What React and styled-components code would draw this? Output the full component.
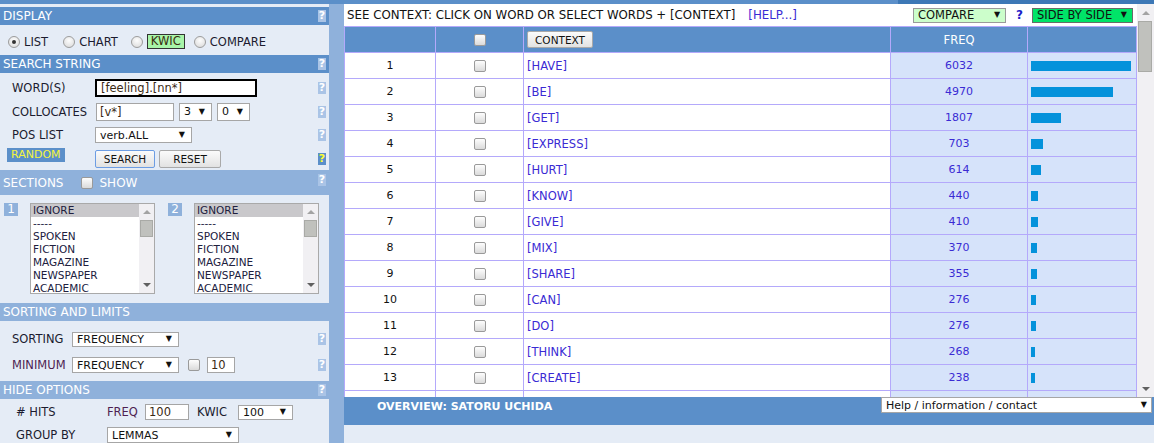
import React from 'react';
import styled, { createGlobalStyle } from 'styled-components';

const blue = '#5b8fc9';
const lightBlue = '#8fb1db';
const panelBg = '#e5ecf6';
const lavender = '#b4a9fb';
const freqBg = '#d6e3fa';
const linkBlue = '#3a2bd4';

const GlobalStyle = createGlobalStyle`
  *, *::before, *::after { box-sizing: border-box; }
  html, body { margin: 0; padding: 0; background: ${panelBg}; }
  body {
    font-family: "DejaVu Sans", Verdana, sans-serif;
    font-size: 11.5px;
    color: #1b1b2f;
  }
`;

const Page = styled.div`
  width: 1154px;
  height: 443px;
  overflow: hidden;
  display: flex;
  flex-direction: column;
  background: ${panelBg};
`;

const TopStrip = styled.div`
  flex: 0 0 4px;
  display: flex;
`;

const StripPart = styled.div`
  flex: ${(p) => (p.$w ? `0 0 ${p.$w}px` : 1)};
  background: ${(p) => p.$c};
`;

const Body = styled.div`
  flex: 1;
  display: flex;
  min-height: 0;
`;

const Sidebar = styled.div`
  flex: 0 0 329px;
  padding-top: 3px;
  display: flex;
  flex-direction: column;
  overflow: hidden;
`;

const Divider = styled.div`
  flex: 0 0 15px;
  background: ${lightBlue};
`;

const Content = styled.div`
  flex: 1;
  min-width: 0;
  min-height: 0;
  display: flex;
  flex-direction: column;
`;

/* ---------- sidebar parts ---------- */

const SectionHeader = styled.div`
  flex: 0 0 ${(p) => p.$h || 18}px;
  background: ${(p) => (p.$light ? lightBlue : blue)};
  color: #fff;
  font-size: 12px;
  display: flex;
  align-items: center;
  padding: 0 3px;
`;

const HelpIcon = styled.span`
  margin-left: auto;
  flex: 0 0 8px;
  height: 12px;
  background: ${(p) => p.$bg || '#aac4e6'};
  color: ${(p) => p.$fg || '#fff'};
  font: bold 11px/12px "DejaVu Sans", sans-serif;
  text-align: center;
  align-self: ${(p) => (p.$top ? 'flex-start' : 'center')};
  margin-top: ${(p) => p.$top || 0}px;
`;

const OptionRow = styled.div`
  flex: 0 0 30px;
  display: flex;
  align-items: center;
  padding: 3px 0 0 8px;
`;

const Option = styled.span`
  display: flex;
  align-items: center;
  gap: 4px;
  margin-right: ${(p) => p.$mr || 0}px;
`;

const Radio = styled.span`
  flex: 0 0 12px;
  height: 12px;
  border-radius: 50%;
  border: 1px solid #9c9c9c;
  background: radial-gradient(circle at 50% 35%, #fdfdfd, #d8d8d8);
  display: flex;
  align-items: center;
  justify-content: center;

  &::after {
    content: '';
    width: 4px;
    height: 4px;
    border-radius: 50%;
    background: #333;
    display: ${(p) => (p.$checked ? 'block' : 'none')};
  }
`;

const Highlight = styled.span`
  background: #a8f5a8;
  border: 1px solid #333;
  padding: 0 3px;
  line-height: 13px;
  color: #3a2e10;
`;

const FormArea = styled.div`
  flex: 0 0 auto;
  padding: ${(p) => p.$pad || '0'};
  display: flex;
  flex-direction: column;
`;

const Row = styled.div`
  flex: 0 0 ${(p) => p.$h}px;
  display: flex;
  align-items: center;
  padding: 0 3px 0 ${(p) => p.$pl ?? 12}px;
`;

const Label = styled.span`
  flex: 0 0 ${(p) => p.$w}px;
  color: ${(p) => (p.$purple ? '#4e1f52' : '#1b1b2f')};
`;

const Field = styled.span`
  flex: 0 0 ${(p) => p.$w}px;
  height: ${(p) => p.$h || 18}px;
  display: flex;
  align-items: center;
  border: ${(p) => (p.$strong ? '2px solid #000' : '1px solid #a5a5a5')};
  background: #fff;
  padding-left: ${(p) => (p.$strong ? 4 : 3)}px;
  color: #3a2a14;
  margin-right: ${(p) => p.$mr || 0}px;
  white-space: nowrap;
`;

const SelectBox = styled.span`
  flex: 0 0 ${(p) => p.$w}px;
  height: ${(p) => p.$h || 16}px;
  display: flex;
  align-items: center;
  justify-content: space-between;
  border: 1px solid ${(p) => p.$border || '#a6a6a6'};
  background: ${(p) => p.$bg || '#fff'};
  padding: 0 ${(p) => p.$pr ?? 6}px 0 ${(p) => p.$pl ?? 4}px;
  font-size: ${(p) => p.$fs || 11}px;
  color: #111;
  margin-right: ${(p) => p.$mr || 0}px;
  margin-left: ${(p) => (p.$auto ? 'auto' : '0')};
  white-space: nowrap;
`;

const Caret = styled.span`
  font-size: 8px;
  line-height: 1;
  color: #111;
`;

const Button = styled.span`
  flex: 0 0 ${(p) => p.$w}px;
  width: ${(p) => p.$w}px;
  height: ${(p) => p.$h || 18}px;
  display: inline-flex;
  align-items: center;
  justify-content: center;
  border: 1px solid ${(p) => (p.$focus ? '#6d9de3' : '#a9a9a9')};
  border-radius: 2px;
  background: linear-gradient(#fbfbfb, #e2e2e2);
  font-size: 10.5px;
  color: #111;
  margin-right: ${(p) => p.$mr || 0}px;
  vertical-align: middle;
`;

const RandomTag = styled.span`
  flex: 0 0 58px;
  height: 14px;
  align-self: flex-start;
  margin: 1px 30px 0 0;
  background: ${blue};
  color: #f4f43c;
  font-size: 11px;
  line-height: 14px;
  padding-left: 4px;
`;

const Check = styled.span`
  display: inline-block;
  vertical-align: middle;
  flex: 0 0 12px;
  width: 12px;
  height: 12px;
  border: 1px solid #9a9a9a;
  border-radius: 2px;
  background: linear-gradient(#fdfdfd, #dadada);
  margin: 0 ${(p) => p.$mr || 0}px 0 ${(p) => p.$ml || 0}px;
`;

const SectionsBody = styled.div`
  flex: 0 0 108px;
  display: flex;
  align-items: flex-start;
  padding: 8px 0 0 4px;
`;

const NumTag = styled.span`
  flex: 0 0 14px;
  height: 13px;
  margin-right: 12px;
  background: ${lightBlue};
  color: #fff;
  font-size: 12px;
  line-height: 13px;
  text-align: center;
`;

const ListBox = styled.div`
  flex: 0 0 125px;
  height: 91px;
  margin-right: 13px;
  border: 1px solid #a9a9a9;
  background: #fff;
  display: flex;
  overflow: hidden;
`;

const ListItems = styled.div`
  flex: 1;
  font-size: 10.5px;
  color: #20203e;
`;

const ListItem = styled.div`
  height: 13px;
  line-height: 13px;
  padding-left: 2px;
  background: ${(p) => (p.$sel ? '#c9c8cb' : 'transparent')};
`;

const MiniScroll = styled.div`
  flex: 0 0 ${(p) => p.$w || 15}px;
  background: #f1f0f3;
  display: flex;
  flex-direction: column;
`;

const ArrowBox = styled.div`
  flex: 0 0 ${(p) => p.$h}px;
  display: flex;
  align-items: center;
  justify-content: center;
`;

const Tri = styled.span`
  width: 0;
  height: 0;
  border-left: 4px solid transparent;
  border-right: 4px solid transparent;
  ${(p) =>
    p.$up
      ? `border-bottom: 4px solid ${p.$c};`
      : `border-top: 4px solid ${p.$c};`}
`;

const Thumb = styled.div`
  flex: 0 0 ${(p) => p.$h}px;
  margin: ${(p) => p.$m || '0 1px'};
  background: #c0c1bd;
  border: 1px solid #a9aaa6;
`;

const Gap = styled.div`
  flex: 1;
`;

/* ---------- content parts ---------- */

const ScrollArea = styled.div`
  flex: 0 0 393px;
  height: 393px;
  min-height: 0;
  overflow: hidden;
  display: flex;
`;

const ScrollInner = styled.div`
  flex: 1;
  min-width: 0;
  overflow: hidden;
  background: #fff;
  display: flex;
  flex-direction: column;
`;

const ContextBar = styled.div`
  flex: 0 0 22px;
  display: flex;
  align-items: center;
  padding: 0 4px 0 3px;
  color: #111;
  font-size: 11.8px;
  white-space: nowrap;
`;

const HelpLink = styled.span`
  margin-left: 13px;
  color: ${linkBlue};
`;

const Question = styled.span`
  margin: 0 9px 0 10px;
  color: #2020c8;
  font-weight: bold;
  font-size: 12px;
`;

const Table = styled.table`
  border-collapse: collapse;
  table-layout: fixed;
  width: 792px;
  flex-shrink: 0;
`;

const Col = styled.col`
  width: ${(p) => p.$w}px;
`;

const Th = styled.th`
  height: 26px;
  padding: 0 0 0 ${(p) => p.$pl || 0}px;
  background: ${blue};
  border: 1px solid ${lavender};
  font-weight: normal;
  color: #fff;
  font-size: 11.5px;
  text-align: ${(p) => p.$align || 'center'};
`;

const Td = styled.td`
  height: 26px;
  padding: 0 0 0 ${(p) => p.$pl || 0}px;
  border: 1px solid ${lavender};
  background: ${(p) => (p.$freq ? freqBg : '#fff')};
  color: ${(p) => p.$color || '#111'};
  font-size: ${(p) => p.$fs || 11}px;
  text-align: ${(p) => p.$align || 'center'};
  vertical-align: middle;
  white-space: nowrap;
`;

const Bar = styled.div`
  height: 10px;
  background: #0492db;
`;

const Scrollbar = styled.div`
  flex: 0 0 17px;
  background: #f1f0f3;
  display: flex;
  flex-direction: column;
`;

const OverviewBar = styled.div`
  flex: 0 0 28px;
  background: ${blue};
  display: flex;
  align-items: flex-start;
  justify-content: space-between;
`;

const OverviewTitle = styled.span`
  padding: 2px 0 0 33px;
  font-weight: bold;
  font-size: 11px;
  line-height: 16px;
  color: #fff;
`;

const rows = [
  [1, 'HAVE', 6032],
  [2, 'BE', 4970],
  [3, 'GET', 1807],
  [4, 'EXPRESS', 703],
  [5, 'HURT', 614],
  [6, 'KNOW', 440],
  [7, 'GIVE', 410],
  [8, 'MIX', 370],
  [9, 'SHARE', 355],
  [10, 'CAN', 276],
  [11, 'DO', 276],
  [12, 'THINK', 268],
  [13, 'CREATE', 238],
];

const sections = ['IGNORE', '-----', 'SPOKEN', 'FICTION', 'MAGAZINE', 'NEWSPAPER', 'ACADEMIC'];

const Select = ({ children, ...rest }) => (
  <SelectBox {...rest}>
    <span>{children}</span>
    <Caret>▼</Caret>
  </SelectBox>
);

const SectionList = () => (
  <ListBox>
    <ListItems>
      {sections.map((s, i) => (
        <ListItem key={s} $sel={i === 0}>
          {s}
        </ListItem>
      ))}
    </ListItems>
    <MiniScroll>
      <ArrowBox $h={16}>
        <Tri $up $c="#a3a3a3" />
      </ArrowBox>
      <Thumb $h={17} />
      <Gap />
      <ArrowBox $h={16}>
        <Tri $c="#606060" />
      </ArrowBox>
    </MiniScroll>
  </ListBox>
);

const LeftPanel = () => (
  <Sidebar>
    <SectionHeader>
      DISPLAY
      <HelpIcon>?</HelpIcon>
    </SectionHeader>
    <OptionRow>
      <Option $mr={15}>
        <Radio $checked />
        LIST
      </Option>
      <Option $mr={13}>
        <Radio />
        CHART
      </Option>
      <Option $mr={9}>
        <Radio />
        <Highlight>KWIC</Highlight>
      </Option>
      <Option>
        <Radio />
        COMPARE
      </Option>
    </OptionRow>

    <SectionHeader>
      SEARCH STRING
      <HelpIcon>?</HelpIcon>
    </SectionHeader>
    <FormArea $pad="3px 0 0">
      <Row $h={24}>
        <Label $w={83}>WORD(S)</Label>
        <Field $w={162} $strong>
          [feeling].[nn*]
        </Field>
        <HelpIcon>?</HelpIcon>
      </Row>
      <Row $h={23}>
        <Label $w={84}>COLLOCATES</Label>
        <Field $w={78} $mr={5}>
          [v*]
        </Field>
        <Select $w={33} $h={18} $mr={5}>
          3
        </Select>
        <Select $w={33} $h={18}>
          0
        </Select>
        <HelpIcon>?</HelpIcon>
      </Row>
      <Row $h={24}>
        <Label $w={83}>POS LIST</Label>
        <Select $w={97}>verb.ALL</Select>
        <HelpIcon>?</HelpIcon>
      </Row>
      <Row $h={23} $pl={7}>
        <RandomTag>RANDOM</RandomTag>
        <Button $w={60} $focus $mr={4}>
          SEARCH
        </Button>
        <Button $w={62}>RESET</Button>
        <HelpIcon $bg={blue} $fg="#ffff33">
          ?
        </HelpIcon>
      </Row>
    </FormArea>

    <SectionHeader $light $h={25}>
      SECTIONS
      <Check $ml={17} $mr={7} />
      SHOW
      <HelpIcon $top={4}>?</HelpIcon>
    </SectionHeader>
    <SectionsBody>
      <NumTag>1</NumTag>
      <SectionList />
      <NumTag>2</NumTag>
      <SectionList />
    </SectionsBody>

    <SectionHeader $light>SORTING AND LIMITS</SectionHeader>
    <FormArea $pad="5px 0 3px">
      <Row $h={26}>
        <Label $w={60}>SORTING</Label>
        <Select $w={107} $h={15}>
          FREQUENCY
        </Select>
        <HelpIcon>?</HelpIcon>
      </Row>
      <Row $h={26}>
        <Label $w={60} $purple>
          MINIMUM
        </Label>
        <Select $w={107} $mr={9}>
          FREQUENCY
        </Select>
        <Check $mr={7} />
        <Field $w={28} $h={16}>
          10
        </Field>
        <HelpIcon>?</HelpIcon>
      </Row>
    </FormArea>

    <SectionHeader $light>
      HIDE OPTIONS
      <HelpIcon>?</HelpIcon>
    </SectionHeader>
    <FormArea $pad="1px 0 0">
      <Row $h={24} $pl={16}>
        <Label $w={91}># HITS</Label>
        <Label $w={38} $purple>
          FREQ
        </Label>
        <Field $w={44} $h={16} $mr={8}>
          100
        </Field>
        <Label $w={41}>KWIC</Label>
        <Select $w={55} $h={15}>
          100
        </Select>
      </Row>
      <Row $h={22} $pl={16}>
        <Label $w={91}>GROUP BY</Label>
        <Select $w={132}>LEMMAS</Select>
      </Row>
    </FormArea>
  </Sidebar>
);

const ResultsTable = () => {
  const max = rows[0][2];
  return (
    <Table>
      <colgroup>
        <Col $w={91} />
        <Col $w={88} />
        <Col $w={367} />
        <Col $w={137} />
        <Col $w={109} />
      </colgroup>
      <thead>
        <tr>
          <Th />
          <Th>
            <Check />
          </Th>
          <Th $align="left" $pl={3}>
            <Button $w={66} $h={17}>
              CONTEXT
            </Button>
          </Th>
          <Th>FREQ</Th>
          <Th />
        </tr>
      </thead>
      <tbody>
        {rows.map(([n, word, freq]) => (
          <tr key={n}>
            <Td>{n}</Td>
            <Td>
              <Check />
            </Td>
            <Td $align="left" $pl={3} $fs={11.5} $color={linkBlue}>
              [{word}]
            </Td>
            <Td $freq $color={linkBlue}>
              {freq}
            </Td>
            <Td $freq $align="left" $pl={3}>
              <Bar style={{ width: `${Math.round((freq / max) * 100)}px` }} />
            </Td>
          </tr>
        ))}
        <tr>
          <Td />
          <Td />
          <Td />
          <Td $freq />
          <Td $freq />
        </tr>
      </tbody>
    </Table>
  );
};

const RightPanel = () => (
  <Content>
    <ScrollArea>
      <ScrollInner>
        <ContextBar>
          SEE CONTEXT: CLICK ON WORD OR SELECT WORDS + [CONTEXT]
          <HelpLink>[HELP...]</HelpLink>
          <Select $auto $w={93} $h={15} $bg="#ccfecb" $border="#9a9a9a" $pr={5} $fs={11.5}>
            COMPARE
          </Select>
          <Question>?</Question>
          <Select $w={101} $h={15} $bg="#00e468" $border="#6a6a6a" $pr={5} $fs={11.5}>
            SIDE BY SIDE
          </Select>
        </ContextBar>
        <ResultsTable />
      </ScrollInner>
      <Scrollbar>
        <ArrowBox $h={17}>
          <Tri $up $c="#a3a3a3" />
        </ArrowBox>
        <Thumb $h={51} $m="0 2px 0 1px" />
        <Gap />
        <ArrowBox $h={17}>
          <Tri $c="#606060" />
        </ArrowBox>
      </Scrollbar>
    </ScrollArea>
    <OverviewBar>
      <OverviewTitle>OVERVIEW: SATORU UCHIDA</OverviewTitle>
      <Select $w={271} $mr={2} $pl={4} $pr={4} $fs={11}>
        Help / information / contact
      </Select>
    </OverviewBar>
  </Content>
);

export default function App() {
  return (
    <>
      <GlobalStyle />
      <Page>
        <TopStrip>
          <StripPart $w={898} $c={blue} />
          <StripPart $c="#3d78b6" />
        </TopStrip>
        <Body>
          <LeftPanel />
          <Divider />
          <RightPanel />
        </Body>
      </Page>
    </>
  );
}
